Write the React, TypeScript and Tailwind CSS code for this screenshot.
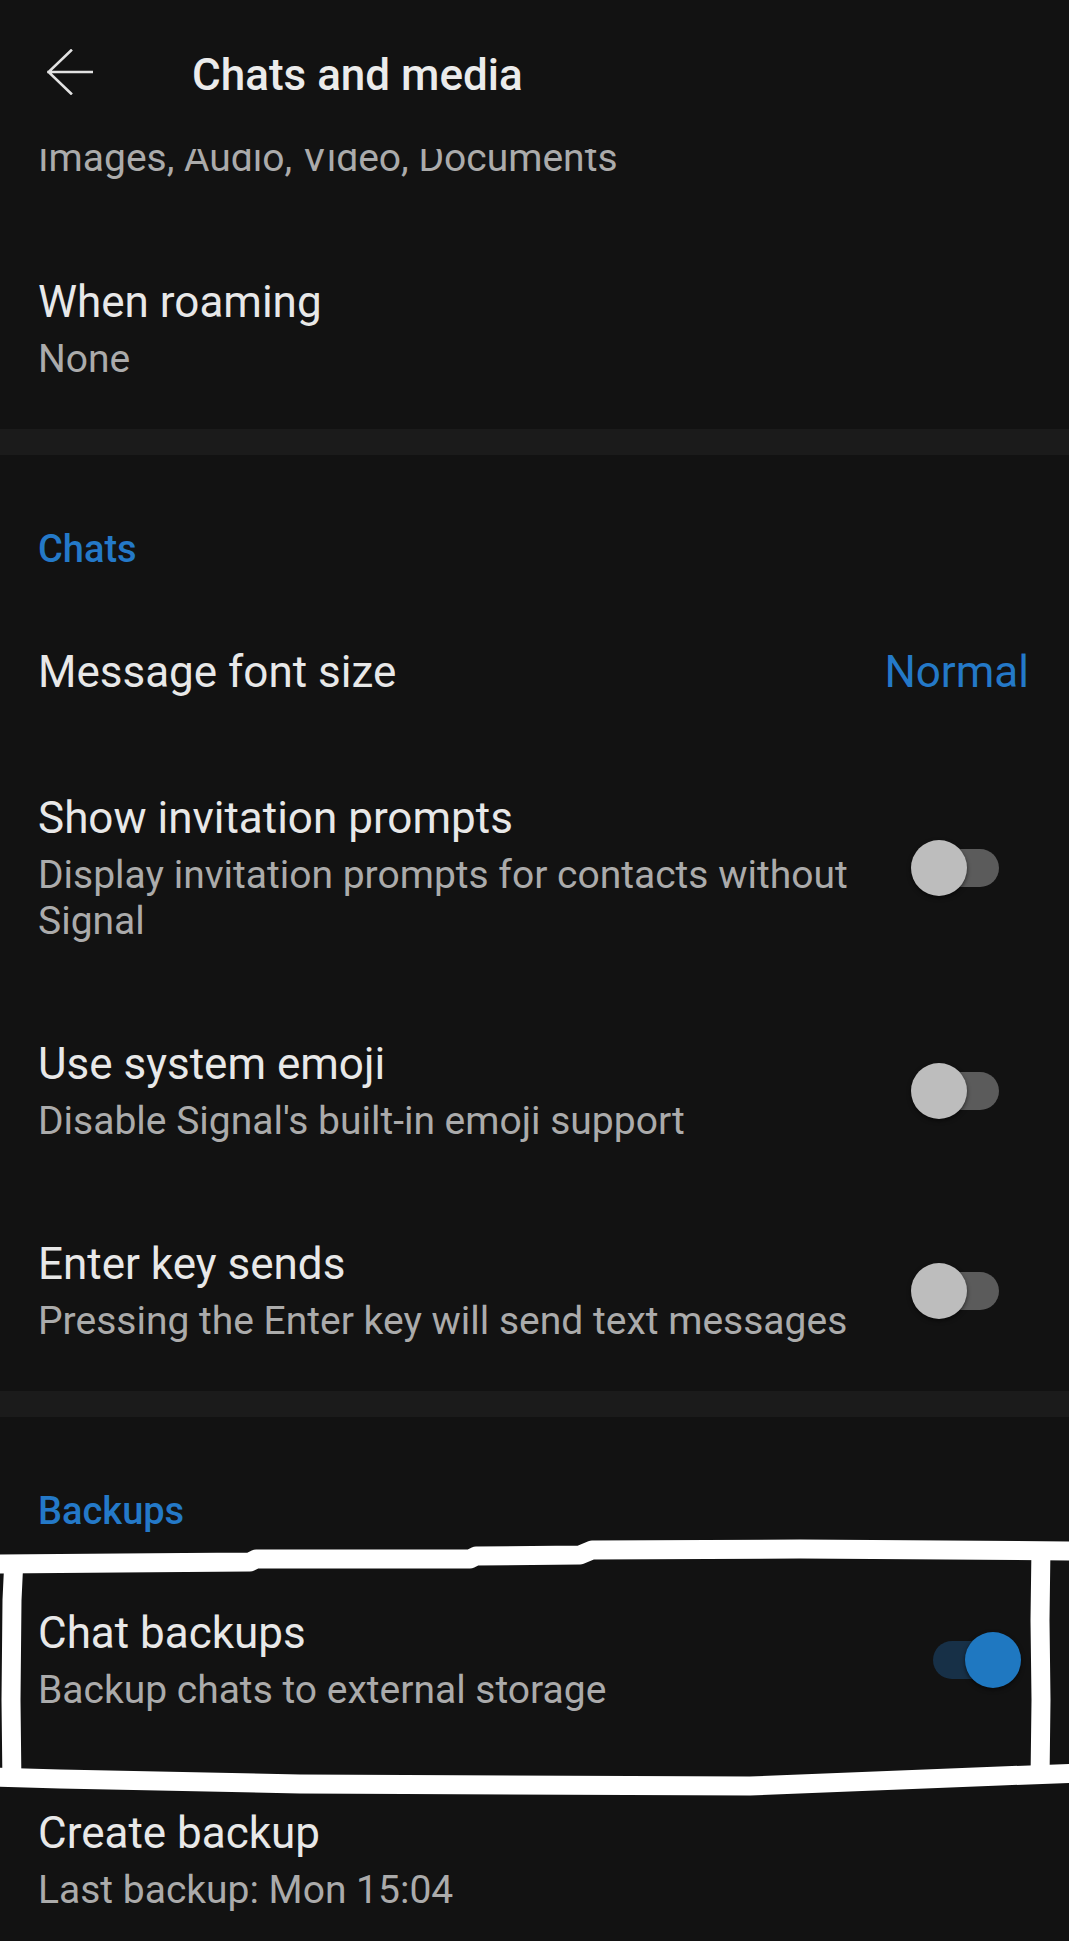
import React from "react";

function Toggle({ on }: { on: boolean }) {
  return (
    <div
      className={
        on
          ? "relative w-[66px] h-[38px] rounded-full bg-[#173047]"
          : "relative w-[66px] h-[38px] rounded-full bg-[#5b5b5b]"
      }
    >
      <div
        className={
          on
            ? "absolute top-[-9px] left-[32px] w-[56px] h-[56px] rounded-full bg-[#1f78c1] shadow-[0_2px_4px_rgba(0,0,0,0.55)]"
            : "absolute top-[-9px] left-[-22px] w-[56px] h-[56px] rounded-full bg-[#bdbdbd] shadow-[0_2px_4px_rgba(0,0,0,0.55)]"
        }
      />
    </div>
  );
}

function Row({
  title,
  sub,
  toggle,
}: {
  title: string;
  sub?: string;
  toggle?: boolean;
}) {
  return (
    <div className="flex items-center pl-[38px] pr-[40px] py-[47px]">
      <div className="flex-1 min-w-0">
        <div className="text-[44px] leading-[52px] text-[#e8e8e8]">{title}</div>
        {sub && (
          <div className="mt-[8px] text-[39px] leading-[46px] text-[#ababab]">{sub}</div>
        )}
      </div>
      {toggle !== undefined && (
        <div className="ml-[40px] mr-[30px] shrink-0">
          <Toggle on={toggle} />
        </div>
      )}
    </div>
  );
}

function Band() {
  return <div className="h-[26px] bg-[#1b1b1b]" />;
}

export default function App() {
  return (
    <div className="relative w-[1069px] h-[1941px] overflow-hidden bg-[#121212] font-[family-name:Roboto,'Noto_Sans',sans-serif]">
      {/* Header */}
      <div className="flex items-start h-[149px] bg-[#121212]">
        <svg
          className="ml-[47px] mt-[49px] shrink-0"
          width="46"
          height="46"
          viewBox="0 0 46 46"
          fill="none"
          stroke="#e2e2e2"
          strokeWidth="2.6"
          strokeLinecap="square"
        >
          <path d="M24 1.5 L1.5 23 L24 44.5 M1.5 23 H45" />
        </svg>
        <div className="ml-[99px] mt-[49px] text-[44px] leading-[52px] font-medium text-[#ebebeb]">
          Chats and media
        </div>
      </div>

      {/* Scrolled content, partly hidden under the header */}
      <div className="overflow-hidden">
        <div className="-mt-[14px] pl-[38px] pr-[40px] pb-[48px]">
          <div className="text-[39px] leading-[46px] text-[#ababab]">
            Images, Audio, Video, Documents
          </div>
        </div>
      </div>
      <Row title="When roaming" sub="None" />
      <Band />

      <div className="pl-[38px] pr-[40px] pt-[71px] pb-[27px] text-[38px] leading-[46px] font-medium text-[#2479c8]">
        Chats
      </div>
      <div className="flex items-center justify-between pl-[38px] pr-[40px] py-[47px]">
        <div className="text-[44px] leading-[52px] text-[#e8e8e8]">Message font size</div>
        <div className="text-[44px] leading-[52px] text-[#2479c8]">Normal</div>
      </div>
      <Row
        title="Show invitation prompts"
        sub="Display invitation prompts for contacts without Signal"
        toggle={false}
      />
      <Row
        title="Use system emoji"
        sub="Disable Signal's built-in emoji support"
        toggle={false}
      />
      <Row
        title="Enter key sends"
        sub="Pressing the Enter key will send text messages"
        toggle={false}
      />
      <Band />

      <div className="pl-[38px] pr-[40px] pt-[71px] pb-[26px] text-[38px] leading-[46px] font-medium text-[#2479c8]">
        Backups
      </div>
      <Row title="Chat backups" sub="Backup chats to external storage" toggle={true} />
      <Row title="Create backup" sub="Last backup: Mon 15:04" />

      {/* Hand-drawn highlight outline */}
      <svg
        className="absolute inset-0 pointer-events-none"
        width="1069"
        height="1941"
        viewBox="0 0 1069 1941"
        fill="none"
        stroke="#ffffff"
        strokeWidth="19"
        strokeLinejoin="round"
        strokeLinecap="butt"
      >
        <path d="M-10 1564 L120 1563 L250 1562 L256 1559 L470 1559 L476 1556 L580 1555 L592 1550 L800 1549 L1080 1551" />
        <path d="M14 1558 L12 1600 L11 1700 L12 1786" />
        <path d="M1041 1546 L1040 1620 L1041 1700 L1040 1780" />
        <path d="M-10 1777 L60 1779 L300 1784 L750 1786 L1000 1776 L1080 1773" />
      </svg>
    </div>
  );
}
